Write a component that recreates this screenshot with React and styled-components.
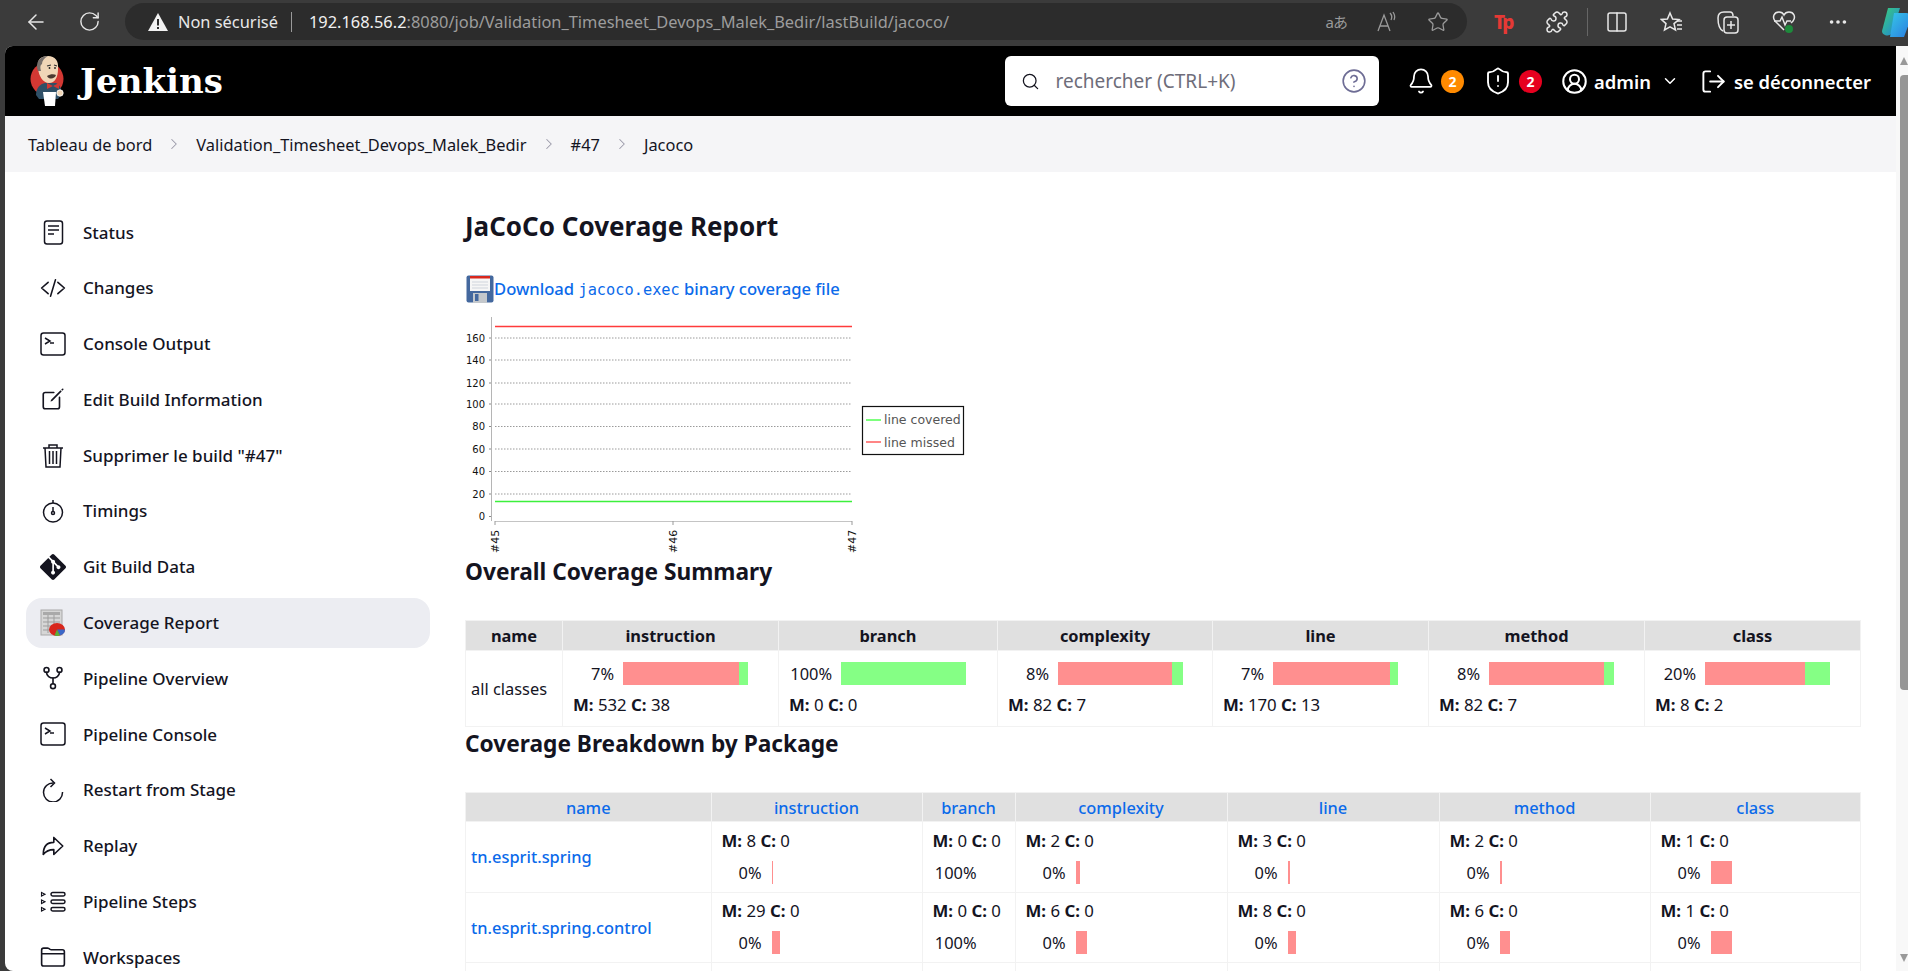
import React from "react";
import styled, { createGlobalStyle } from "styled-components";
import {
  ArrowLeft,
  RotateCw,
  Star,
  Puzzle,
  Columns2,
  Ellipsis,
  Search,
  Bell,
  ShieldAlert,
  ChevronDown,
  ChevronRight,
  LogOut,
  CircleUserRound,
  CircleHelp,
} from "lucide-react";
import {
  IoCodeSlashOutline,
  IoCreateOutline,
  IoArrowRedoOutline,
  IoFolderOutline,
  IoGitNetworkOutline,
} from "react-icons/io5";
import { SiGit } from "react-icons/si";

const FONT = `"Noto Sans", "Open Sans", sans-serif`;

const GlobalStyle = createGlobalStyle`
  html, body {
    margin: 0;
    height: 971px;
    overflow: hidden;
    background: #3b3b3b;
    font-family: ${FONT};
    color: #14141f;
  }
`;

const Frame = styled.div`
  display: flex;
  flex-direction: column;
  width: 1908px;
  height: 971px;
  overflow: hidden;
`;

/* browser chrome */
const BrowserBar = styled.div`
  display: flex;
  align-items: center;
  flex: none;
  height: 46px;
  background: #3b3b3b;
  color: #e6e6e6;
  padding-bottom: 3px;
  box-sizing: border-box;
`;
const NavButtons = styled.div`
  display: flex;
  align-items: center;
  gap: 30px;
  width: 125px;
  padding-left: 24px;
  box-sizing: border-box;
  flex: none;
`;
const AddressPill = styled.div`
  display: flex;
  align-items: center;
  width: 1342px;
  height: 37px;
  flex: none;
  background: #2c2c2c;
  border-radius: 19px;
  padding: 0 18px 0 22px;
  box-sizing: border-box;
  font-size: 16.4px;
  white-space: nowrap;
`;
const SecureText = styled.span`
  margin-left: 9px;
  color: #e8e8e8;
`;
const Separator = styled.span`
  width: 1px;
  height: 20px;
  background: #9a9a9a;
  margin: 0 17px 0 13px;
`;
const Host = styled.span`
  color: #f0f0f0;
`;
const UrlRest = styled.span`
  color: #9c9c9c;
`;
const PillIcons = styled.div`
  display: flex;
  align-items: center;
  gap: 28px;
  margin-left: auto;
  color: #9a9a9a;
`;
const PillGlyph = styled.span`
  font-family: ${FONT}, "Noto Sans CJK JP", sans-serif;
  font-size: 15px;
  white-space: nowrap;
  letter-spacing: -1px;
`;
const Toolbar = styled.div`
  display: flex;
  align-items: center;
  gap: 31px;
  margin-left: 27px;
  flex: 1;
  color: #e8e8e8;
`;
const TpLogo = styled.span`
  color: #e53935;
  font-weight: 800;
  font-size: 19px;
  letter-spacing: -2px;
  width: 20px;
`;
const ToolbarDivider = styled.span`
  width: 1px;
  height: 28px;
  background: #666;
  margin: 0 -13.5px;
`;

const WindowRow = styled.div`
  display: flex;
  flex: 1;
  min-height: 0;
  padding-left: 5px;
`;
const Page = styled.div`
  flex: 1;
  min-width: 0;
  background: #fff;
  border-radius: 8px 0 0 8px;
  overflow: hidden;
`;
const Scrollbar = styled.div`
  display: flex;
  flex-direction: column;
  align-items: flex-end;
  flex: none;
  width: 12px;
  background: #f8f8f8;
`;
const ScrollArrow = styled.div`
  width: 0;
  height: 0;
  border-left: 4.5px solid transparent;
  border-right: 4.5px solid transparent;
  ${(p) => (p.$down ? "border-top: 8px solid #999;" : "border-bottom: 8px solid #999;")}
  margin: ${(p) => (p.$down ? "auto 0 9px" : "11px 0 0")};
`;
const ScrollThumb = styled.div`
  width: 8px;
  height: 615px;
  margin-top: 10px;
  background: #969696;
  border-radius: 4px 0 0 4px;
`;

/* jenkins header */
const Header = styled.header`
  display: flex;
  align-items: center;
  height: 70px;
  background: #000;
  color: #fff;
  padding-left: 23px;
`;
const Brand = styled.div`
  display: flex;
  align-items: center;
  gap: 14px;
  font-family: "DejaVu Serif", "Liberation Serif", serif;
  font-weight: 700;
  font-size: 34px;
  margin-right: auto;
`;
const SearchBox = styled.div`
  display: flex;
  align-items: center;
  width: 374px;
  height: 50px;
  background: #fff;
  border-radius: 6px;
  padding: 0 12px 0 16px;
  box-sizing: border-box;
  color: #14141f;
`;
const Placeholder = styled.span`
  margin-left: 16px;
  font-size: 19px;
  color: #6e6d7a;
  flex: 1;
`;
const HeaderActions = styled.div`
  display: flex;
  align-items: center;
  margin-left: 28.5px;
  margin-right: 25px;
  font-size: 18.4px;
  font-weight: 600;
`;
const Counter = styled.span`
  display: flex;
  align-items: center;
  justify-content: center;
  width: 23px;
  height: 23px;
  border-radius: 50%;
  background: ${(p) => p.$bg};
  font-size: 14px;
  font-weight: 700;
  margin: 0 ${(p) => p.$after}px 0 6px;
`;
const HeaderLabel = styled.span`
  margin: 0 ${(p) => p.$after || 0}px 0 ${(p) => p.$before || 0}px;
`;

/* breadcrumb */
const Breadcrumb = styled.nav`
  display: flex;
  align-items: center;
  height: 56px;
  background: #f5f5f7;
  padding-left: 23px;
  font-size: 16.4px;
  color: #14141f;
`;
const Crumb = styled.span`
  white-space: nowrap;
`;
const CrumbSep = styled.span`
  display: flex;
  justify-content: center;
  width: ${(p) => p.$w || 44}px;
  color: #9a99a8;
`;

const Body = styled.div`
  display: flex;
  align-items: flex-start;
`;

/* side menu */
const Sidebar = styled.aside`
  display: flex;
  flex-direction: column;
  gap: 5.8px;
  flex: none;
  width: 404px;
  margin-left: 21px;
  padding-top: 35px;
`;
const MenuItem = styled.div`
  display: flex;
  align-items: center;
  height: 50px;
  border-radius: 16px;
  padding-left: 14px;
  font-size: 17px;
  font-weight: 500;
  background: ${(p) => (p.$active ? "#ecedf2" : "transparent")};
`;
const MenuIcon = styled.span`
  display: flex;
  align-items: center;
  justify-content: center;
  width: 26px;
  height: 26px;
  margin-right: 17px;
  font-size: 26px;
  flex: none;
`;

/* report */
const Main = styled.main`
  flex: 1;
  min-width: 0;
  margin-left: 35px;
  margin-right: 35px;
`;
const PageTitle = styled.h1`
  margin: 38px 0 0;
  font-size: 26px;
  line-height: 32px;
  font-weight: 700;
`;
const DownloadRow = styled.div`
  display: flex;
  align-items: center;
  height: 28px;
  margin-top: 33px;
  margin-left: 1px;
  font-size: 16.6px;
  font-weight: 500;
  color: #0b6aea;
`;
const DownloadText = styled.span`
  white-space: nowrap;
  margin-top: -2px;
`;
const Mono = styled.code`
  font-family: "DejaVu Sans Mono", "Liberation Mono", monospace;
  font-size: 15.3px;
  font-weight: 400;
`;
const ChartSvg = styled.svg`
  display: block;
  margin-top: 7px;
`;
const SectionTitle = styled.h2`
  margin: ${(p) => p.$top}px 0 ${(p) => p.$bottom}px;
  font-size: 22.7px;
  line-height: 30px;
  font-weight: 700;
`;
const Table = styled.table`
  width: 1395px;
  table-layout: fixed;
  border-collapse: collapse;
  font-size: 16.4px;
`;
const Col = styled.col`
  width: ${(p) => p.$w}px;
`;
const Th = styled.th`
  height: ${(p) => p.$h}px;
  padding: 0;
  background: #e0e0e0;
  border: 1px solid #f2f2f2;
  font-weight: ${(p) => (p.$link ? 500 : 700)};
  color: ${(p) => (p.$link ? "#0b6aea" : "#14141f")};
`;
const Td = styled.td`
  height: ${(p) => p.$h}px;
  padding: 0 0 0 10px;
  border: 1px solid #f2f2f2;
  vertical-align: middle;
`;
const NameLink = styled.span`
  font-weight: 500;
  color: #0b6aea;
  margin-left: -5px;
`;
const NameText = styled.span`
  margin-left: -5px;
`;
const BarRow = styled.div`
  display: flex;
  align-items: center;
  gap: ${(p) => p.$gap}px;
  white-space: nowrap;
`;
const Pct = styled.span`
  display: block;
  width: ${(p) => p.$w}px;
  text-align: right;
  flex: none;
`;
const Bar = styled.div`
  display: flex;
  height: 23px;
`;
const Missed = styled.div`
  background: #ff8f8f;
  height: 100%;
`;
const Covered = styled.div`
  background: #85ff85;
  height: 100%;
`;
const Counts = styled.div`
  white-space: nowrap;
  line-height: 22px;
  font-size: 16.8px;
  margin: ${(p) => p.$margin};
`;

const WarningIcon = () => (
  <svg width="22" height="20" viewBox="0 0 22 20">
    <path d="M11 1 L21 19 H1 Z" fill="#f2f2f2" />
    <rect x="10" y="7" width="2" height="6.5" fill="#2c2c2c" />
    <rect x="10" y="15" width="2" height="2" fill="#2c2c2c" />
  </svg>
);

const ReadAloudIcon = () => (
  <svg width="24" height="24" viewBox="0 0 24 24" fill="none" stroke="currentColor" strokeWidth="1.3">
    <path d="M3 21 L9 5 L15 21 M5 16 H13" />
    <path d="M15 3 C17 5 17 8 16 10 M18 2 C20 5 20 8 19 10" />
  </svg>
);

const FavListIcon = () => (
  <svg width="24" height="24" viewBox="0 0 24 24" fill="none" stroke="currentColor" strokeWidth="1.5">
    <path d="M10 3 L12.6 9 L19 9.5 L14 13.6 L15.5 20 L10 16.8 L4.5 20 L6 13.6 L1.5 9.5 L7.4 9 Z" />
    <path d="M17 12 H22 M17 16 H22 M17 20 H22" transform="translate(0 -1)" />
  </svg>
);

const CollectionsIcon = () => (
  <svg width="26" height="26" viewBox="0 0 26 26" fill="none" stroke="currentColor" strokeWidth="1.5">
    <path d="M8 22 C4 20 3 16 3 9 C3 5 5 3 9 3 L15 3 C17 3 18 5 18 7" />
    <rect x="9" y="8" width="14" height="16" rx="3" />
    <path d="M16 12 V20 M12 16 H20" />
  </svg>
);

const HealthIcon = () => (
  <svg width="24" height="26" viewBox="0 0 24 26" fill="none" stroke="currentColor" strokeWidth="1.5">
    <path d="M12 21 L3 12 C0 8 2 3 7 3 C9 3 11 4 12 6 C13 4 15 3 17 3 C22 3 24 8 21 12 L19 14" />
    <path d="M2 12 H8 L10 8 L13 16 L15 12 H19" />
    <circle cx="17" cy="20" r="4" fill="#1e8a3c" stroke="none" />
  </svg>
);

const CopilotIcon = () => (
  <svg width="30" height="34" viewBox="0 0 30 34">
    <defs>
      <linearGradient id="copA" x1="0" y1="0" x2="1" y2="1">
        <stop offset="0" stopColor="#36c6e8" />
        <stop offset="1" stopColor="#2a7de1" />
      </linearGradient>
      <linearGradient id="copB" x1="0" y1="0" x2="1" y2="1">
        <stop offset="0" stopColor="#3ad07a" />
        <stop offset="1" stopColor="#1f7fdc" />
      </linearGradient>
    </defs>
    <path d="M8 3 H20 L12 28 C10 32 2 31 2 26 Z" fill="url(#copB)" />
    <path d="M14 8 H26 C30 8 30 12 30 16 L24 32 H10 Z" fill="url(#copA)" />
  </svg>
);

const DocIcon = () => (
  <svg width="21" height="25" viewBox="0 0 21 25" fill="none" stroke="#14141f" strokeWidth="1.5">
    <rect x="1.5" y="1" width="18" height="23" rx="2.5" />
    <path d="M5 6 H16 M5 10 H16 M5 14 H11" />
  </svg>
);

const ConsoleIcon = () => (
  <svg width="26" height="24" viewBox="0 0 26 24" fill="none" stroke="#14141f" strokeWidth="1.5">
    <rect x="1" y="1" width="24" height="22" rx="2.5" />
    <path d="M5 6 L10 9 L5 12 M10 11 H14" />
  </svg>
);

const TrashIcon = () => (
  <svg width="22" height="25" viewBox="0 0 22 25" fill="none" stroke="#14141f" strokeWidth="1.5">
    <path d="M1 5 H21 M7 5 V2 H15 V5" />
    <path d="M3 5 L4 24 H18 L19 5" />
    <path d="M7.5 8 V21 M11 8 V21 M14.5 8 V21" />
  </svg>
);

const TimerIcon = () => (
  <svg width="22" height="24" viewBox="0 0 22 24" fill="none" stroke="#14141f" strokeWidth="1.5">
    <circle cx="11" cy="13.5" r="9.5" />
    <path d="M11 1 V4 M11 8 V12.5" />
    <circle cx="11" cy="14" r="1.5" />
  </svg>
);

const RestartIcon = () => (
  <svg width="22" height="24" viewBox="0 0 22 24" fill="none" stroke="#14141f" strokeWidth="1.5">
    <path d="M11.5 5 A9.5 9.5 0 1 0 20.5 14" />
    <path d="M8.5 1 L12.5 5 L8.5 9" />
  </svg>
);

const StepsIcon = () => (
  <svg width="26" height="22" viewBox="0 0 26 22" fill="none" stroke="#14141f" strokeWidth="1.5">
    <rect x="11" y="1.5" width="14" height="3.5" rx="1.7" />
    <rect x="11" y="9" width="14" height="3.5" rx="1.7" />
    <rect x="11" y="16.5" width="14" height="3.5" rx="1.7" />
    <path d="M1.5 1.5 L5 3.2 L1.5 5 Z M1.5 9 L5 10.7 L1.5 12.5 Z M1.5 16.5 L5 18.2 L1.5 20 Z" strokeWidth="1.1" />
  </svg>
);

const CoverageIcon = () => (
  <svg width="26" height="28" viewBox="0 0 26 28">
    <rect x="1" y="1" width="21" height="25" fill="#d6d6d6" stroke="#a8a8a8" />
    <rect x="3" y="3" width="17" height="3" fill="#a9a9a9" />
    <path d="M3 9 H20 M3 13 H20 M3 17 H20 M3 21 H20 M8 6 V24 M14 6 V24" stroke="#9d9d9d" strokeWidth="1" />
    <ellipse cx="17" cy="20.5" rx="8" ry="6.5" fill="#d8261c" />
    <path d="M17 20.5 L25 20.5 A8 6.5 0 0 1 20 26.5 Z" fill="#3a68c8" />
    <path d="M17 20.5 L20 26.5 A8 6.5 0 0 1 14.5 26.5 Z" fill="#58b03a" />
  </svg>
);

const FloppyIcon = () => (
  <svg width="28" height="28" viewBox="0 0 28 28">
    <rect x="0.5" y="0.5" width="27" height="27" rx="2" fill="#44689e" />
    <rect x="4" y="1" width="20" height="15" fill="#f6f6f6" />
    <rect x="4" y="1" width="20" height="2.5" fill="#d8271c" />
    <path d="M6 7 H22 M6 10 H22 M6 13 H22" stroke="#cfd4dc" strokeWidth="1" />
    <rect x="7" y="18" width="14" height="10" fill="#c4c8cc" />
    <rect x="9" y="19" width="3.5" height="7" fill="#44689e" />
  </svg>
);

const JenkinsLogo = () => (
  <svg width="38" height="52" viewBox="0 0 38 52">
    <circle cx="19" cy="24" r="16.5" fill="#d33833" />
    <path d="M8 40 C8 33 12 29 17 28 L28 28 C32 30 34 34 33 40 L30 44 H11 Z" fill="#2f5067" />
    <path d="M10 9 C10 3 15 1 20 1 C27 1 31 6 30 14 C30 22 27 28 21 28 C15 28 11 21 10 14 Z" fill="#f0d6b7" />
    <path d="M10 16 C7 8 11 1 20 1 C16 3 14 6 14 9 C12 10 12 13 13 16 Z" fill="#77706c" />
    <path d="M19 11 L23 10 M26 10 L29 11" stroke="#333" strokeWidth="1.2" />
    <circle cx="21.5" cy="13" r="0.9" fill="#222" />
    <circle cx="27" cy="13" r="0.9" fill="#222" />
    <path d="M19 21 C22 19 26 19 28 20 C27 24 21 25 19 21 Z" fill="#4a3a32" />
    <path d="M25 31 L19 28 L19 34 Z M25 31 L31 28 L31 34 Z" fill="#d33833" />
    <path d="M15 37 H28 L27 51 H17 Z" fill="#fff" />
    <circle cx="32" cy="38" r="3.2" fill="#f0d6b7" stroke="#fff" strokeWidth="0.8" />
  </svg>
);

const menu = [
  { label: "Status", icon: <DocIcon /> },
  { label: "Changes", icon: <IoCodeSlashOutline /> },
  { label: "Console Output", icon: <ConsoleIcon /> },
  { label: "Edit Build Information", icon: <IoCreateOutline /> },
  { label: 'Supprimer le build "#47"', icon: <TrashIcon /> },
  { label: "Timings", icon: <TimerIcon /> },
  { label: "Git Build Data", icon: <SiGit /> },
  { label: "Coverage Report", icon: <CoverageIcon />, active: true },
  { label: "Pipeline Overview", icon: <IoGitNetworkOutline /> },
  { label: "Pipeline Console", icon: <ConsoleIcon /> },
  { label: "Restart from Stage", icon: <RestartIcon /> },
  { label: "Replay", icon: <IoArrowRedoOutline /> },
  { label: "Pipeline Steps", icon: <StepsIcon /> },
  { label: "Workspaces", icon: <IoFolderOutline /> },
];

const summaryCols = [97, 216, 219, 215, 216, 216, 216];
const packageCols = [245.5, 211, 93, 212, 212, 211, 210.5];
const headers = ["name", "instruction", "branch", "complexity", "line", "method", "class"];

const summary = [
  { pct: "7%", m: 532, c: 38, red: 116, green: 9 },
  { pct: "100%", m: 0, c: 0, red: 0, green: 125 },
  { pct: "8%", m: 82, c: 7, red: 114, green: 11 },
  { pct: "7%", m: 170, c: 13, red: 117, green: 8 },
  { pct: "8%", m: 82, c: 7, red: 115, green: 10 },
  { pct: "20%", m: 8, c: 2, red: 100, green: 25 },
];

const packages = [
  {
    name: "tn.esprit.spring",
    cells: [
      { m: 8, c: 0, pct: "0%", red: 1.5 },
      { m: 0, c: 0, pct: "100%" },
      { m: 2, c: 0, pct: "0%", red: 4 },
      { m: 3, c: 0, pct: "0%", red: 2.5 },
      { m: 2, c: 0, pct: "0%", red: 2 },
      { m: 1, c: 0, pct: "0%", red: 21 },
    ],
  },
  {
    name: "tn.esprit.spring.control",
    cells: [
      { m: 29, c: 0, pct: "0%", red: 8 },
      { m: 0, c: 0, pct: "100%" },
      { m: 6, c: 0, pct: "0%", red: 11 },
      { m: 8, c: 0, pct: "0%", red: 8 },
      { m: 6, c: 0, pct: "0%", red: 10 },
      { m: 1, c: 0, pct: "0%", red: 21 },
    ],
  },
];

const yTicks = [
  [160, 28],
  [140, 50],
  [120, 73],
  [100, 94],
  [80, 116.5],
  [60, 139],
  [40, 161.5],
  [20, 184],
  [0, 206.5],
];

const TrendChart = () => (
  <ChartSvg width="500" height="246" viewBox="0 0 500 246" fontFamily={`"DejaVu Sans", sans-serif`}>
    <line x1="26.5" y1="7" x2="26.5" y2="211" stroke="#b5b5b5" />
    <line x1="30" y1="211.5" x2="387" y2="211.5" stroke="#c4c4c4" />
    {yTicks.map(([label, y]) => (
      <g key={label}>
        {label !== 0 && (
          <line x1="30" y1={y} x2="387" y2={y} stroke="#9a9a9a" strokeDasharray="1.5 1.5" />
        )}
        <line x1="24" y1={y} x2="26" y2={y} stroke="#888" />
        <text x="20" y={y + 3.5} textAnchor="end" fontSize="10" fill="#111">
          {label}
        </text>
      </g>
    ))}
    <line x1="30" y1="16.5" x2="387" y2="16.5" stroke="#ff3b3b" strokeWidth="1.6" />
    <line x1="30" y1="191.5" x2="387" y2="191.5" stroke="#3cf03c" strokeWidth="1.6" />
    {[
      ["#45", 30],
      ["#46", 208],
      ["#47", 387],
    ].map(([label, x]) => (
      <g key={label}>
        <line x1={x} y1="211" x2={x} y2="215" stroke="#999" />
        <text transform={`translate(${x + 4} 243) rotate(-90)`} fontSize="11" fill="#111">
          {label}
        </text>
      </g>
    ))}
    <rect x="397.5" y="96.5" width="101" height="48" fill="#fff" stroke="#111" strokeWidth="1.2" />
    <line x1="401" y1="110" x2="416" y2="110" stroke="#7dff7d" strokeWidth="2" />
    <line x1="401" y1="132" x2="416" y2="132" stroke="#ff8585" strokeWidth="2" />
    <text x="419" y="114" fontSize="12.5" fill="#555">line covered</text>
    <text x="419" y="137" fontSize="12.5" fill="#555">line missed</text>
  </ChartSvg>
);

const CoverageBar = ({ red = 0, green = 0 }) => (
  <Bar>
    {red > 0 && <Missed style={{ width: red }} />}
    {green > 0 && <Covered style={{ width: green }} />}
  </Bar>
);

const CountText = ({ m, c, margin }) => (
  <Counts $margin={margin}>
    <b>M:</b> {m} <b>C:</b> {c}
  </Counts>
);

const App = () => (
  <Frame>
    <GlobalStyle />
    <BrowserBar>
      <NavButtons>
        <ArrowLeft size={24} strokeWidth={1.5} />
        <RotateCw size={23} strokeWidth={1.5} />
      </NavButtons>
      <AddressPill>
        <WarningIcon />
        <SecureText>Non sécurisé</SecureText>
        <Separator />
        <Host>192.168.56.2</Host>
        <UrlRest>:8080/job/Validation_Timesheet_Devops_Malek_Bedir/lastBuild/jacoco/</UrlRest>
        <PillIcons>
          <PillGlyph>aあ</PillGlyph>
          <ReadAloudIcon />
          <Star size={22} strokeWidth={1.4} />
        </PillIcons>
      </AddressPill>
      <Toolbar>
        <TpLogo>Tp</TpLogo>
        <Puzzle size={24} strokeWidth={1.5} />
        <ToolbarDivider />
        <Columns2 size={24} strokeWidth={1.5} />
        <FavListIcon />
        <CollectionsIcon />
        <HealthIcon />
        <Ellipsis size={22} />
        <CopilotIcon />
      </Toolbar>
    </BrowserBar>
    <WindowRow>
      <Page>
        <Header>
          <Brand>
            <JenkinsLogo />
            Jenkins
          </Brand>
          <SearchBox>
            <Search size={19} strokeWidth={1.6} />
            <Placeholder>rechercher (CTRL+K)</Placeholder>
            <CircleHelp size={26} strokeWidth={1.5} color="#6e6d95" />
          </SearchBox>
          <HeaderActions>
            <Bell size={28} strokeWidth={1.5} />
            <Counter $bg="#ff8a00" $after={19}>2</Counter>
            <ShieldAlert size={30} strokeWidth={1.5} />
            <Counter $bg="#e6001f" $after={19}>2</Counter>
            <CircleUserRound size={27} strokeWidth={1.8} />
            <HeaderLabel $before={6} $after={10}>admin</HeaderLabel>
            <ChevronDown size={18} strokeWidth={2} />
            <HeaderLabel $before={21} />
            <LogOut size={27} strokeWidth={1.7} />
            <HeaderLabel $before={7}>se déconnecter</HeaderLabel>
          </HeaderActions>
        </Header>
        <Breadcrumb>
          <Crumb>Tableau de bord</Crumb>
          <CrumbSep><ChevronRight size={18} strokeWidth={1.4} /></CrumbSep>
          <Crumb>Validation_Timesheet_Devops_Malek_Bedir</Crumb>
          <CrumbSep><ChevronRight size={18} strokeWidth={1.4} /></CrumbSep>
          <Crumb>#47</Crumb>
          <CrumbSep><ChevronRight size={18} strokeWidth={1.4} /></CrumbSep>
          <Crumb>Jacoco</Crumb>
        </Breadcrumb>
        <Body>
          <Sidebar>
            {menu.map((item) => (
              <MenuItem key={item.label} $active={item.active}>
                <MenuIcon>{item.icon}</MenuIcon>
                {item.label}
              </MenuItem>
            ))}
          </Sidebar>
          <Main>
            <PageTitle>JaCoCo Coverage Report</PageTitle>
            <DownloadRow>
              <FloppyIcon />
              <DownloadText>
                Download <Mono>jacoco.exec</Mono> binary coverage file
              </DownloadText>
            </DownloadRow>
            <TrendChart />
            <SectionTitle $top={1} $bottom={33}>Overall Coverage Summary</SectionTitle>
            <Table>
              <colgroup>
                {summaryCols.map((w, i) => <Col key={i} $w={w} />)}
              </colgroup>
              <thead>
                <tr>
                  {headers.map((h) => <Th key={h} $h={29}>{h}</Th>)}
                </tr>
              </thead>
              <tbody>
                <tr>
                  <Td $h={75}><NameText>all classes</NameText></Td>
                  {summary.map((s, i) => (
                    <Td key={i} $h={75}>
                      <BarRow $gap={9}>
                        <Pct $w={s.pct === "100%" ? 43 : 41}>{s.pct}</Pct>
                        <CoverageBar red={s.red} green={s.green} />
                      </BarRow>
                      <CountText m={s.m} c={s.c} margin="9px 0 0" />
                    </Td>
                  ))}
                </tr>
              </tbody>
            </Table>
            <SectionTitle $top={2} $bottom={33}>Coverage Breakdown by Package</SectionTitle>
            <Table>
              <colgroup>
                {packageCols.map((w, i) => <Col key={i} $w={w} />)}
              </colgroup>
              <thead>
                <tr>
                  {headers.map((h) => <Th key={h} $h={28} $link>{h}</Th>)}
                </tr>
              </thead>
              <tbody>
                {packages.map((p) => (
                  <tr key={p.name}>
                    <Td $h={69.5}><NameLink>{p.name}</NameLink></Td>
                    {p.cells.map((cell, i) => (
                      <Td key={i} $h={69.5}>
                        <CountText m={cell.m} c={cell.c} margin="0 0 9px" />
                        <BarRow $gap={10}>
                          <Pct $w={cell.red ? 40 : 44}>{cell.pct}</Pct>
                          <CoverageBar red={cell.red} />
                        </BarRow>
                      </Td>
                    ))}
                  </tr>
                ))}
                <tr>
                  {headers.map((h) => <Td key={h} $h={70} />)}
                </tr>
              </tbody>
            </Table>
          </Main>
        </Body>
      </Page>
      <Scrollbar>
        <ScrollArrow />
        <ScrollThumb />
        <ScrollArrow $down />
      </Scrollbar>
    </WindowRow>
  </Frame>
);

export default App;
